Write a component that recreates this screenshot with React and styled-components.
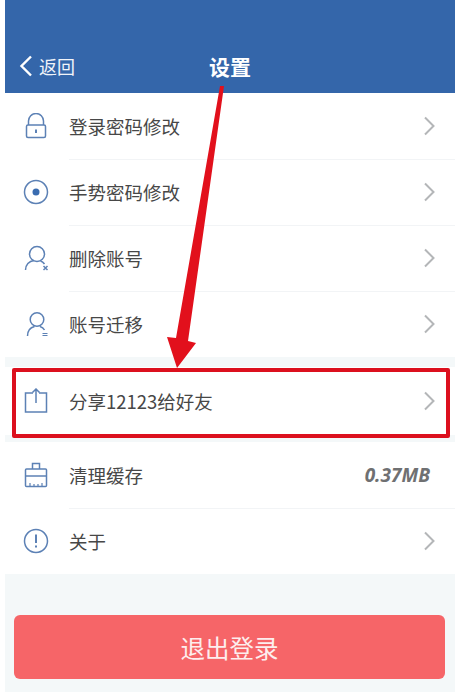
import React from "react";
import styled, { createGlobalStyle } from "styled-components";

const GlobalStyle = createGlobalStyle`
  html, body {
    margin: 0;
    padding: 0;
    background: #fff;
  }
  body {
    font-family: "Noto Sans CJK SC", "Noto Sans", sans-serif;
  }
`;

const iconProps = {
  width: 26,
  height: 26,
  viewBox: "0 0 26 26",
  fill: "none",
  stroke: "#5c81b5",
  strokeWidth: 1.5,
};

const LockIcon = () => (
  <svg {...iconProps}>
    <path d="M5.500 12V8a7.500 7.500 0 0 1 15 0v4" />
    <rect x="3.500" y="12" width="19" height="12.500" rx="1.500" />
    <path d="M13 16.500v3.500" strokeWidth="2" />
  </svg>
);

const TargetIcon = () => (
  <svg {...iconProps}>
    <circle cx="13" cy="13" r="11.500" />
    <circle cx="13" cy="13" r="3.500" fill="#3a6cb0" stroke="none" />
  </svg>
);

const UserRemoveIcon = () => (
  <svg {...iconProps}>
    <circle cx="14" cy="9" r="7.500" />
    <path d="M2.500 25c0-5 3.500-9 8.500-9.500" />
    <path d="M17.500 16c2 .5 3 1.500 4 3" />
    <path d="M20.500 21l4 4M24.500 21l-4 4" strokeWidth="1.500" />
  </svg>
);

const UserMoveIcon = () => (
  <svg {...iconProps}>
    <circle cx="14" cy="8.500" r="6.800" />
    <path d="M4.500 25c0-5 3-8.500 7-9.500" />
    <path d="M17 15.500c2 .5 3.500 1.500 4.500 3.500" />
    <path d="M19.500 22.500h5M19.500 24.500h5" strokeWidth="1" />
  </svg>
);

const ShareIcon = () => (
  <svg {...iconProps}>
    <path d="M10 5H2.500v19h21V5H16" />
    <path d="M13 15V1M9.500 4.500L13 1l3.500 3.500" />
  </svg>
);

const BrushIcon = () => (
  <svg {...iconProps}>
    <path d="M9.500 7V1.500h7V7" />
    <rect x="2.500" y="7" width="21" height="17.500" rx="1" />
    <path d="M2.500 14h21" />
    <path d="M7 21v3.500M11 22v2.500M15 22v2.500M19 21v3.500" strokeWidth="1.200" />
  </svg>
);

const InfoIcon = () => (
  <svg {...iconProps}>
    <circle cx="13" cy="13" r="11.500" />
    <path d="M13 6.500v8.500" strokeWidth="2" />
    <path d="M13 17.500v2" strokeWidth="2" />
  </svg>
);

const Chevron = () => (
  <svg width="12" height="20" viewBox="0 0 12 20" fill="none" stroke="#b4b6b8" strokeWidth="2">
    <path d="M2 1.500L10.500 10 2 18.500" />
  </svg>
);

const accountRows = [
  { icon: <LockIcon />, label: "登录密码修改" },
  { icon: <TargetIcon />, label: "手势密码修改" },
  { icon: <UserRemoveIcon />, label: "删除账号" },
  { icon: <UserMoveIcon />, label: "账号迁移" },
];

const otherRows = [
  { icon: <BrushIcon />, label: "清理缓存", value: "0.37MB" },
  { icon: <InfoIcon />, label: "关于" },
];

const SettingRow = ({ icon, label, value, height }) => (
  <Row $height={height}>
    <IconSlot>{icon}</IconSlot>
    <RowInner>
      <Label>{label}</Label>
      {value ? <Value>{value}</Value> : <Chevron />}
    </RowInner>
  </Row>
);

export default function App() {
  return (
    <>
      <GlobalStyle />
      <Page>
        <Phone>
          <Header>
            <BackLink>
              <svg width="14" height="22" viewBox="0 0 14 22" fill="none" stroke="#fff" strokeWidth="2.400">
                <path d="M12 1.500L2.500 11 12 20.500" />
              </svg>
              <span>返回</span>
            </BackLink>
            <Title>设置</Title>
          </Header>

          <Group>
            {accountRows.map((row) => (
              <SettingRow key={row.label} {...row} />
            ))}
          </Group>

          <ShareGroup>
            <SettingRow icon={<ShareIcon />} label="分享12123给好友" height={68} />
          </ShareGroup>

          <Group>
            {otherRows.map((row) => (
              <SettingRow key={row.label} {...row} />
            ))}
          </Group>

          <LogoutWrap>
            <LogoutButton>退出登录</LogoutButton>
          </LogoutWrap>

          <Highlight />
          <Arrow width="460" height="380" viewBox="0 0 460 380">
            <path d="M177 368L196 343 188 341 224 86 220 86 176 338 167 337Z" fill="#e2101c" />
          </Arrow>
        </Phone>
      </Page>
    </>
  );
}

const Page = styled.div`
  width: 460px;
  height: 699px;
  padding: 0 5px;
  box-sizing: border-box;
  overflow: hidden;
`;

const Phone = styled.div`
  position: relative;
  height: 692px;
  background: #f4f8f9;
`;

const Header = styled.header`
  display: grid;
  grid-template-columns: 1fr auto 1fr;
  align-items: center;
  height: 93px;
  padding: 39px 0 0 14px;
  box-sizing: border-box;
  background: #3466aa;
  color: #fff;
`;

const BackLink = styled.div`
  display: flex;
  align-items: center;
  gap: 6px;
  font-size: 18px;
  color: #f1f4f9;
`;

const Title = styled.h1`
  margin: 0 14px 0 0;
  font-size: 21px;
  font-weight: 700;
`;

const Group = styled.section`
  background: #fff;
`;

const ShareGroup = styled.section`
  margin: 10px 0 7px;
  background: #fff;
`;

const Row = styled.div`
  display: flex;
  align-items: stretch;
  height: ${(p) => p.$height || 66}px;
  padding-left: 18px;
  box-sizing: border-box;
`;

const IconSlot = styled.div`
  display: flex;
  align-items: center;
  flex: 0 0 46px;
  svg {
    display: block;
  }
`;

const RowInner = styled.div`
  flex: 1;
  display: flex;
  align-items: center;
  justify-content: space-between;
  padding-right: 20px;
  ${Row}:not(:last-child) & {
    box-shadow: 0 1px 0 #f2f4f6;
  }
`;

const Label = styled.span`
  font-size: 18.500px;
  color: #474747;
`;

const Value = styled.span`
  font-family: "Noto Sans", sans-serif;
  font-size: 19px;
  font-weight: 700;
  font-style: italic;
  color: #6f7072;
  margin-right: 5px;
`;

const LogoutWrap = styled.div`
  padding: 41px 10px 0 9px;
`;

const LogoutButton = styled.div`
  display: flex;
  align-items: center;
  justify-content: center;
  height: 64px;
  border-radius: 6px;
  background: #f66568;
  color: #fdeeee;
  font-size: 24.500px;
`;

const Highlight = styled.div`
  position: absolute;
  left: 7px;
  top: 368px;
  width: 438px;
  height: 70px;
  box-sizing: border-box;
  border: 4.500px solid #dc101e;
  border-radius: 2px;
  pointer-events: none;
`;

const Arrow = styled.svg`
  position: absolute;
  left: -5px;
  top: 0;
  pointer-events: none;
`;
